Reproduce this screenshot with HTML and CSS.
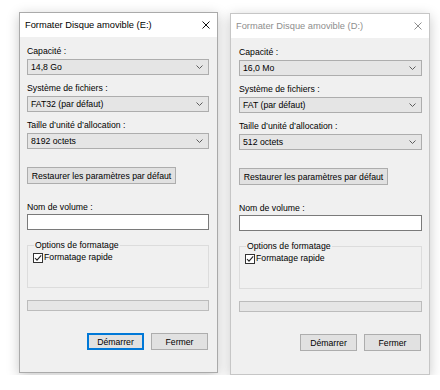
FILE: index.html
```html
<!DOCTYPE html>
<html lang="fr">
<head>
  <meta charset="UTF-8" />
  <meta name="viewport" content="width=device-width, initial-scale=1.0"/>
  <title>Formater Disque amovible</title>
  <link rel="stylesheet" href="styles.css">
</head>
<body>
  <div class="desktop">
    <!-- Active dialog -->
    <section class="dialog is-active">
      <header class="titlebar">
        <span class="title">Formater Disque amovible (E:)</span>
        <svg class="close" viewBox="0 0 8 8"><path d="M0.5 0.5L7.5 7.5M7.5 0.5L0.5 7.5"/></svg>
      </header>
      <div class="dialog-body">
        <div class="field-label">Capacité :</div>
        <div class="combo">
          <span>14,8 Go</span>
          <svg class="chevron" viewBox="0 0 7 4"><path d="M0.5 0.5L3.5 3.5L6.5 0.5"/></svg>
        </div>
        <div class="field-label">Système de fichiers :</div>
        <div class="combo">
          <span>FAT32 (par défaut)</span>
          <svg class="chevron" viewBox="0 0 7 4"><path d="M0.5 0.5L3.5 3.5L6.5 0.5"/></svg>
        </div>
        <div class="field-label">Taille d’unité d’allocation :</div>
        <div class="combo">
          <span>8192 octets</span>
          <svg class="chevron" viewBox="0 0 7 4"><path d="M0.5 0.5L3.5 3.5L6.5 0.5"/></svg>
        </div>
        <button class="btn restore">Restaurer les paramètres par défaut</button>
        <div class="field-label volume">Nom de volume :</div>
        <div class="textbox"></div>
        <fieldset class="group">
          <legend>Options de formatage</legend>
          <div class="check">
            <svg class="checkbox" viewBox="0 0 10 10"><rect x="0.5" y="0.5" width="9" height="9"/><path d="M2 5L4 7.2L8.2 2.4"/></svg>
            <span>Formatage rapide</span>
          </div>
        </fieldset>
        <div class="progress"></div>
        <div class="actions">
          <button class="btn primary">Démarrer</button>
          <button class="btn">Fermer</button>
        </div>
      </div>
    </section>

    <!-- Inactive dialog -->
    <section class="dialog is-inactive">
      <header class="titlebar">
        <span class="title">Formater Disque amovible (D:)</span>
        <svg class="close" viewBox="0 0 8 8"><path d="M0.5 0.5L7.5 7.5M7.5 0.5L0.5 7.5"/></svg>
      </header>
      <div class="dialog-body">
        <div class="field-label">Capacité :</div>
        <div class="combo">
          <span>16,0 Mo</span>
          <svg class="chevron" viewBox="0 0 7 4"><path d="M0.5 0.5L3.5 3.5L6.5 0.5"/></svg>
        </div>
        <div class="field-label">Système de fichiers :</div>
        <div class="combo">
          <span>FAT (par défaut)</span>
          <svg class="chevron" viewBox="0 0 7 4"><path d="M0.5 0.5L3.5 3.5L6.5 0.5"/></svg>
        </div>
        <div class="field-label">Taille d’unité d’allocation :</div>
        <div class="combo">
          <span>512 octets</span>
          <svg class="chevron" viewBox="0 0 7 4"><path d="M0.5 0.5L3.5 3.5L6.5 0.5"/></svg>
        </div>
        <button class="btn restore">Restaurer les paramètres par défaut</button>
        <div class="field-label volume">Nom de volume :</div>
        <div class="textbox"></div>
        <fieldset class="group">
          <legend>Options de formatage</legend>
          <div class="check">
            <svg class="checkbox" viewBox="0 0 10 10"><rect x="0.5" y="0.5" width="9" height="9"/><path d="M2 5L4 7.2L8.2 2.4"/></svg>
            <span>Formatage rapide</span>
          </div>
        </fieldset>
        <div class="progress"></div>
        <div class="actions">
          <button class="btn">Démarrer</button>
          <button class="btn">Fermer</button>
        </div>
      </div>
    </section>
  </div>
</body>
</html>
```

FILE: styles.css
```css
body {
  margin: 0;
  background: #fff;
  font-family: "Liberation Sans", Arial, sans-serif;
  font-size: 8.7px;
  color: #000;
}
.desktop {
  display: flex;
  align-items: flex-start;
  gap: 12px;
  padding: 12px 0 0 19px;
}
.dialog {
  width: 199px;
  height: 361px;
  box-sizing: border-box;
  background: #f0f0f0;
  border: 1px solid #aaa;
  box-shadow: 0 3px 12px rgba(0, 0, 0, 0.22);
  display: flex;
  flex-direction: column;
}
.dialog.is-inactive {
  width: 200px;
  height: 362px;
  margin-top: 1px;
  border-color: #c6c6c6;
}
.titlebar {
  height: 24px;
  background: #fff;
  display: flex;
  align-items: center;
  justify-content: space-between;
  padding: 0 7px 0 5px;
}
.title {
  font-size: 9.3px;
  color: #000;
}
.close {
  width: 8px;
  height: 8px;
}
.close path {
  stroke: #111;
  stroke-width: 1;
  fill: none;
}
.is-inactive .title {
  color: #8e8e8e;
}
.is-inactive .close path {
  stroke: #8e8e8e;
}
.dialog-body {
  flex-grow: 1;
  display: flex;
  flex-direction: column;
  padding: 7px 8px 0 7px;
}
.is-inactive .dialog-body {
  padding: 7px 7px 0 8px;
}
.field-label {
  line-height: 14px;
  margin-bottom: 1px;
}
.field-label.volume {
  margin-bottom: 0;
}
.combo {
  height: 16px;
  box-sizing: border-box;
  background: #e5e5e5;
  border: 1px solid #adadad;
  display: flex;
  align-items: center;
  justify-content: space-between;
  padding: 0 5px 0 3px;
  margin-bottom: 6px;
}
.chevron {
  width: 7px;
  height: 4px;
}
.chevron path {
  stroke: #5c5c5c;
  stroke-width: 1;
  fill: none;
}
.btn {
  font-family: inherit;
  font-size: inherit;
  color: #000;
  height: 17px;
  box-sizing: border-box;
  background: #e1e1e1;
  border: 1px solid #adadad;
  padding: 0;
  margin: 0;
}
.btn.restore {
  align-self: flex-start;
  width: 149px;
  margin-top: 12px;
  margin-bottom: 16px;
}
.btn.primary {
  border: 2px solid #0078d7;
}
.textbox {
  height: 16px;
  box-sizing: border-box;
  background: #fff;
  border: 1px solid #7a7a7a;
}
.group {
  margin: 8px 0 0 0;
  padding: 0 0 0 5px;
  height: 50px;
  box-sizing: border-box;
  border: 1px solid #dcdcdc;
  min-width: 0;
}
.group legend {
  line-height: 14px;
  padding: 0 1px;
  margin-left: 1px;
}
.check {
  display: flex;
  align-items: center;
  gap: 1px;
  line-height: 11px;
}
.checkbox {
  width: 10px;
  height: 10px;
}
.checkbox rect {
  fill: #fff;
  stroke: #333;
  stroke-width: 1;
}
.checkbox path {
  fill: none;
  stroke: #222;
  stroke-width: 1.1;
}
.progress {
  height: 11px;
  box-sizing: border-box;
  margin-top: 12px;
  background: #e6e6e6;
  border: 1px solid #bcbcbc;
}
.actions {
  display: flex;
  justify-content: flex-end;
  gap: 7px;
  margin-top: 22px;
  padding-right: 1px;
}
.actions .btn {
  width: 57px;
}
```
